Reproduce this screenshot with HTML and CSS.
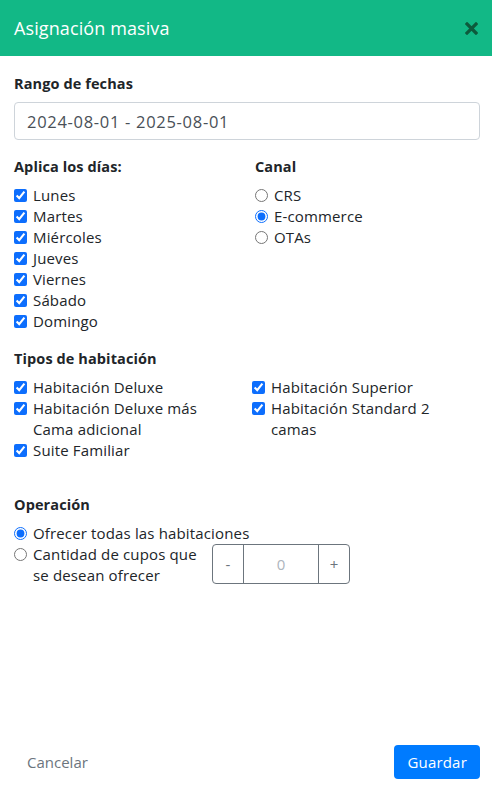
FILE: index.html
```html
<!DOCTYPE html>
<html lang="es">
<head>
    <meta charset="UTF-8">
    <meta name="viewport" content="width=device-width, initial-scale=1.0">
    <title>Asignación masiva</title>
    <link rel="stylesheet" href="styles.css">
</head>
<body>
    <div class="modal">
        <div class="modal-header">
            <h2>Asignación masiva</h2>
            <button class="close" type="button" aria-label="Cerrar">
                <svg width="13" height="13" viewBox="0 0 13 13">
                    <path d="M2 2 L11 11 M11 2 L2 11" stroke="#0d5a3c" stroke-width="3.2" stroke-linecap="square"/>
                </svg>
            </button>
        </div>

        <div class="modal-body">
            <div class="group first">
                <div class="title">Rango de fechas</div>
                <input class="date-input" type="text" value="2024-08-01 - 2025-08-01">
            </div>

            <div class="cols">
                <div class="group">
                    <div class="title">Aplica los días:</div>
                    <label class="check"><input type="checkbox" checked> Lunes</label>
                    <label class="check"><input type="checkbox" checked> Martes</label>
                    <label class="check"><input type="checkbox" checked> Miércoles</label>
                    <label class="check"><input type="checkbox" checked> Jueves</label>
                    <label class="check"><input type="checkbox" checked> Viernes</label>
                    <label class="check"><input type="checkbox" checked> Sábado</label>
                    <label class="check"><input type="checkbox" checked> Domingo</label>
                </div>
                <div class="group">
                    <div class="title">Canal</div>
                    <label class="check"><input type="radio" name="canal"> CRS</label>
                    <label class="check"><input type="radio" name="canal" checked> E-commerce</label>
                    <label class="check"><input type="radio" name="canal"> OTAs</label>
                </div>
            </div>

            <div class="group">
                <div class="title">Tipos de habitación</div>
                <div class="rooms">
                    <label class="check"><input type="checkbox" checked> <span>Habitación Deluxe</span></label>
                    <label class="check"><input type="checkbox" checked> <span>Habitación Superior</span></label>
                    <label class="check"><input type="checkbox" checked> <span>Habitación Deluxe más Cama adicional</span></label>
                    <label class="check"><input type="checkbox" checked> <span>Habitación Standard 2 camas</span></label>
                    <label class="check"><input type="checkbox" checked> <span>Suite Familiar</span></label>
                </div>
            </div>

            <div class="group operation">
                <div class="title">Operación</div>
                <label class="check"><input type="radio" name="op" checked> Ofrecer todas las habitaciones</label>
                <div class="op-row">
                    <label class="check op-label"><input type="radio" name="op"> <span>Cantidad de cupos que se desean ofrecer</span></label>
                    <div class="stepper">
                        <button type="button">-</button>
                        <input type="text" value="0">
                        <button type="button">+</button>
                    </div>
                </div>
            </div>
        </div>

        <div class="modal-footer">
            <button class="btn-link" type="button">Cancelar</button>
            <button class="btn-primary" type="button">Guardar</button>
        </div>
    </div>
</body>
</html>
```

FILE: styles.css
```css
body { margin: 0; font-family: "Open Sans", sans-serif; color: #212529; background: #fff; }
.modal { display: flex; flex-direction: column; height: 793px; }
.modal-header { display: flex; align-items: center; justify-content: space-between; height: 56px; padding: 0 14px; background: #12b886; box-sizing: border-box; }
.modal-header h2 { margin: 0; font-size: 18px; font-weight: 400; color: #fff; letter-spacing: 0.1px; }
.close { border: 0; background: none; padding: 0; display: flex; }
.modal-body { flex: 1; padding: 0 12px 0 14px; }
.group { margin-top: 17px; }
.group.first { margin-top: 18px; }
.title { font-size: 14.5px; font-weight: 700; margin-bottom: 9px; color: #212529; letter-spacing: 0.1px; }
.date-input { width: 100%; box-sizing: border-box; height: 38px; border: 1px solid #ced4da; border-radius: 4px; padding: 0 12px; font: inherit; font-size: 16.5px; letter-spacing: 0.7px; color: #495057; }
.cols { display: grid; grid-template-columns: 241px 1fr; }
.check { display: flex; align-items: flex-start; gap: 6px; font-size: 15px; letter-spacing: 0.15px; line-height: 21px; color: #212529; }
.check input { margin: 4px 0 0; width: 13px; height: 13px; accent-color: #0d6efd; flex: none; }
.rooms { display: grid; grid-template-columns: 238px 1fr; }
.rooms .check { padding-right: 14px; }
.operation { margin-top: 34px; }
.op-row { display: flex; align-items: flex-start; }
.op-label { width: 198px; flex: none; }
.stepper { display: flex; height: 40px; border: 1px solid #6c757d; border-radius: 4px; width: 138px; box-sizing: border-box; }
.stepper button { width: 31px; border: 0; background: none; color: #6c757d; font: inherit; font-size: 15px; padding: 0; }
.stepper input { width: 74px; border: 0; border-left: 1px solid #6c757d; border-right: 1px solid #6c757d; text-align: center; font: inherit; font-size: 15px; color: #adb5bd; padding: 0; }
.modal-footer { display: flex; justify-content: space-between; align-items: center; padding: 0 12px 13px 14px; }
.btn-link { border: 0; background: none; font: inherit; font-size: 15px; color: #6c757d; padding: 8px 13px; }
.btn-primary { border: 0; background: #007bff; color: #fff; font: inherit; font-size: 15px; letter-spacing: 0.2px; border-radius: 4px; padding: 0 13px; height: 34px; }
```
